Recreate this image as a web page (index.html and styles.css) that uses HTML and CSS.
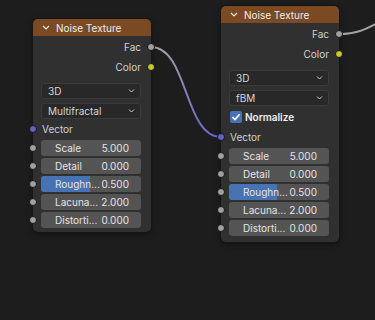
FILE: index.html
```html
<!DOCTYPE html>
<html>
<head>
<meta charset="utf-8">
<link rel="stylesheet" href="styles.css">
</head>
<body>
<div class="canvas">
  <svg class="wires" width="375" height="320" viewBox="0 0 375 320">
    <defs>
      <linearGradient id="g1" gradientUnits="userSpaceOnUse" x1="151" y1="47" x2="221" y2="137">
        <stop offset="0" stop-color="#a3a3a3"/>
        <stop offset="1" stop-color="#6464cc"/>
      </linearGradient>
    </defs>
    <path d="M151 47 C 188 47 184 137 221 137" fill="none" stroke="url(#g1)" stroke-width="2"/>
    <path d="M339 34 C 362 34 370 26 392 16" fill="none" stroke="#a3a3a3" stroke-width="2"/>
  </svg>

  <div class="node node-a">
    <div class="header">
      <svg class="chev" width="8" height="5" viewBox="0 0 8 5"><path d="M1 1 L4 4 L7 1" fill="none" stroke="#e8e8e8" stroke-width="1.2"/></svg>
      <span>Noise Texture</span>
    </div>
    <div class="out-row">Fac<span class="socket grey"></span></div>
    <div class="out-row">Color<span class="socket yellow"></span></div>
    <div class="dropdown first"><span>3D</span><svg width="7" height="4" viewBox="0 0 7 4"><path d="M1 0.5 L3.5 3 L6 0.5" fill="none" stroke="#cfcfcf" stroke-width="1"/></svg></div>
    <div class="dropdown"><span>Multifractal</span><svg width="7" height="4" viewBox="0 0 7 4"><path d="M1 0.5 L3.5 3 L6 0.5" fill="none" stroke="#cfcfcf" stroke-width="1"/></svg></div>
    <div class="in-row"><span class="socket purple"></span>Vector</div>
    <div class="fields">
      <div class="field-row"><span class="socket grey"></span><div class="field"><span class="lbl">Scale</span><span class="val">5.000</span></div></div>
      <div class="field-row"><span class="socket grey"></span><div class="field"><span class="lbl">Detail</span><span class="val">0.000</span></div></div>
      <div class="field-row"><span class="socket grey"></span><div class="field"><span class="fill" style="width:49%"></span><span class="lbl">Roughn...</span><span class="val">0.500</span></div></div>
      <div class="field-row"><span class="socket grey"></span><div class="field"><span class="lbl">Lacuna...</span><span class="val">2.000</span></div></div>
      <div class="field-row"><span class="socket grey"></span><div class="field"><span class="lbl">Distorti...</span><span class="val">0.000</span></div></div>
    </div>
  </div>

  <div class="node node-b">
    <div class="header">
      <svg class="chev" width="8" height="5" viewBox="0 0 8 5"><path d="M1 1 L4 4 L7 1" fill="none" stroke="#e8e8e8" stroke-width="1.2"/></svg>
      <span>Noise Texture</span>
    </div>
    <div class="out-row">Fac<span class="socket grey"></span></div>
    <div class="out-row">Color<span class="socket yellow"></span></div>
    <div class="dropdown first"><span>3D</span><svg width="7" height="4" viewBox="0 0 7 4"><path d="M1 0.5 L3.5 3 L6 0.5" fill="none" stroke="#cfcfcf" stroke-width="1"/></svg></div>
    <div class="dropdown"><span>fBM</span><svg width="7" height="4" viewBox="0 0 7 4"><path d="M1 0.5 L3.5 3 L6 0.5" fill="none" stroke="#cfcfcf" stroke-width="1"/></svg></div>
    <div class="check-row">
      <span class="checkbox"><svg width="12" height="12" viewBox="0 0 12 12"><path d="M2.5 6.2 L5 8.6 L9.6 3.2" fill="none" stroke="#ffffff" stroke-width="1.7"/></svg></span>
      <span>Normalize</span>
    </div>
    <div class="in-row"><span class="socket purple"></span>Vector</div>
    <div class="fields">
      <div class="field-row"><span class="socket grey"></span><div class="field"><span class="lbl">Scale</span><span class="val">5.000</span></div></div>
      <div class="field-row"><span class="socket grey"></span><div class="field"><span class="lbl">Detail</span><span class="val">0.000</span></div></div>
      <div class="field-row"><span class="socket grey"></span><div class="field"><span class="fill" style="width:48%"></span><span class="lbl">Roughn...</span><span class="val">0.500</span></div></div>
      <div class="field-row"><span class="socket grey"></span><div class="field"><span class="lbl">Lacuna...</span><span class="val">2.000</span></div></div>
      <div class="field-row"><span class="socket grey"></span><div class="field"><span class="lbl">Distorti...</span><span class="val">0.000</span></div></div>
    </div>
  </div>
</div>
</body>
</html>
```
FILE: styles.css
```css
html, body {
  margin: 0;
  background: #1d1d1d;
}
body {
  font-family: Inter, "DejaVu Sans", sans-serif;
  font-size: 10px;
  line-height: 1;
}
.canvas {
  position: relative;
  width: 375px;
  height: 320px;
  overflow: hidden;
}
.wires {
  position: absolute;
  left: 0;
  top: 0;
}
.node {
  position: absolute;
  width: 118px;
  box-sizing: border-box;
  background: #303030;
  border-radius: 5px;
  box-shadow: 0 0 0 1px #161616, 0 2px 6px rgba(0, 0, 0, 0.45);
  display: flex;
  flex-direction: column;
  padding-bottom: 4px;
}
.node-a { left: 33px; top: 19px; }
.node-b { left: 221px; top: 6px; padding-bottom: 6px; }
.header {
  height: 17px;
  background: #7b4a22;
  border-radius: 5px 5px 0 0;
  display: flex;
  align-items: center;
  gap: 6px;
  padding-left: 9px;
  color: #ececec;
  margin-bottom: 1px;
}
.chev { display: block; }
.out-row {
  position: relative;
  height: 20px;
  display: flex;
  align-items: center;
  justify-content: flex-end;
  padding-right: 10px;
  color: #d0d0d0;
}
.socket {
  position: absolute;
  top: 50%;
  width: 6px;
  height: 6px;
  margin-top: -4px;
  border-radius: 50%;
  border: 1px solid #151515;
}
.out-row .socket { right: -4px; }
.in-row .socket, .field-row .socket { left: -4px; }
.grey { background: #a1a1a1; }
.yellow { background: #c9c92a; }
.purple { background: #6363c7; }
.dropdown {
  height: 16px;
  box-sizing: border-box;
  margin: 4px 10px 0 8px;
  background: #282828;
  border: 1px solid #3b3b3b;
  border-radius: 3px;
  display: flex;
  align-items: center;
  justify-content: space-between;
  padding: 0 5px 0 6px;
  color: #d6d6d6;
}
.dropdown.first { margin-top: 6px; }
.check-row {
  height: 21px;
  display: flex;
  align-items: center;
  gap: 3px;
  padding-left: 9px;
  color: #f0f0f0;
  font-weight: 600;
}
.checkbox {
  width: 12px;
  height: 12px;
  background: #4772b3;
  border-radius: 2px;
  display: block;
}
.checkbox svg { display: block; }
.in-row {
  position: relative;
  height: 20px;
  display: flex;
  align-items: center;
  padding-left: 9px;
  color: #d0d0d0;
}
.fields {
  display: flex;
  flex-direction: column;
  gap: 2px;
  margin-top: 1px;
}
.field-row {
  position: relative;
  height: 16px;
  display: flex;
  padding: 0 10px 0 8px;
}
.field {
  flex: 1;
  position: relative;
  overflow: hidden;
  background: #545454;
  border-radius: 3px;
  display: flex;
  align-items: center;
  justify-content: space-between;
  padding: 0 12px 0 14px;
  color: #e4e4e4;
}
.fill {
  position: absolute;
  left: 0;
  top: 0;
  bottom: 0;
  background: #4772b3;
}
.lbl, .val { position: relative; }
```
